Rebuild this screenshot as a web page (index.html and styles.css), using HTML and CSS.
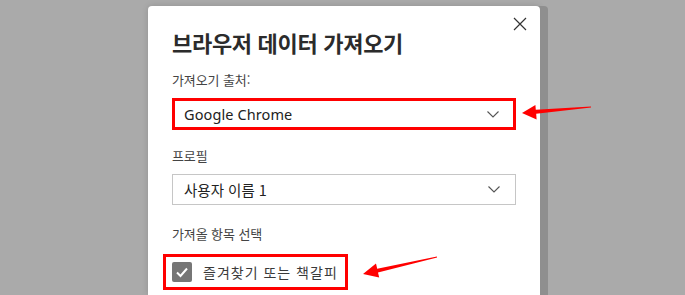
FILE: index.html
```html
<!DOCTYPE html>
<html lang="ko">
<head>
    <meta charset="UTF-8">
    <meta name="viewport" content="width=device-width, initial-scale=1.0">
    <title>브라우저 데이터 가져오기</title>
    <link rel="stylesheet" href="styles.css">
</head>
<body>
    <div class="page">
        <div class="dialog">
            <button class="close" aria-label="닫기">
                <svg width="14" height="14" viewBox="0 0 14 14">
                    <path d="M1 1 L13 13 M13 1 L1 13" stroke="#333" stroke-width="1.2" fill="none"/>
                </svg>
            </button>

            <h1>브라우저 데이터 가져오기</h1>

            <label class="field-label">가져오기 출처:</label>
            <div class="select highlight">
                <span class="latin">Google Chrome</span>
                <svg class="chevron" width="12" height="7" viewBox="0 0 12 7">
                    <path d="M0.5 0.5 L6 6 L11.5 0.5" stroke="#555" stroke-width="1.1" fill="none"/>
                </svg>
            </div>

            <label class="field-label">프로필</label>
            <div class="select">
                <span>사용자 이름 1</span>
                <svg class="chevron" width="12" height="7" viewBox="0 0 12 7">
                    <path d="M0.5 0.5 L6 6 L11.5 0.5" stroke="#555" stroke-width="1.1" fill="none"/>
                </svg>
            </div>

            <label class="field-label section">가져올 항목 선택</label>
            <div class="check-row">
                <span class="checkbox">
                    <svg width="20" height="20" viewBox="0 0 20 20">
                        <path d="M5 10.5 L8.5 14 L15 6.5" stroke="#fff" stroke-width="2" fill="none"/>
                    </svg>
                </span>
                <span class="check-text">즐겨찾기 또는 책갈피</span>
            </div>
        </div>
    </div>

    <!-- callout arrows drawn over the screenshot -->
    <svg class="arrows" width="685" height="295" viewBox="0 0 685 295">
        <polygon fill="#f00" points="522,113 536.6,119.5 536.2,113.8 591,107.6 591,106.6 535.8,109.8 535.4,105"/>
        <polygon fill="#f00" points="363,274 379.2,277.6 378,272.5 437.1,257.6 436.9,256.4 377.2,268.7 376,263.6"/>
    </svg>
</body>
</html>
```

FILE: styles.css
```css
/* dialog over a dimmed page */
body {
    margin: 0;
    background-color: #aaaaaa;
    font-family: "Noto Sans CJK KR", "Noto Sans", sans-serif;
    overflow: hidden;
}

.page {
    padding: 6px 0 0 148px;
}

.dialog {
    position: relative;
    width: 344px;
    height: 268px;
    padding: 21px 24px 0 24px;
    background-color: #fff;
    border-radius: 4px 4px 0 0;
    box-shadow: 8px 0 0 #8f8f8f, 0 0 6px rgba(0, 0, 0, 0.15);
}

.close {
    position: absolute;
    top: 11px;
    right: 13px;
    padding: 0;
    border: none;
    background: none;
    line-height: 0;
}

h1 {
    margin: 0 0 14px 0;
    font-size: 22px;
    line-height: 30px;
    font-weight: 600;
    color: #2b2b2b;
    letter-spacing: -0.3px;
}

.field-label {
    display: block;
    font-size: 13px;
    line-height: 18px;
    color: #444;
    letter-spacing: -0.1px;
    margin-bottom: 9px;
}

.field-label.section {
    margin-bottom: 11px;
}

.select {
    display: flex;
    align-items: center;
    justify-content: space-between;
    box-sizing: border-box;
    height: 31px;
    padding: 0 15px 0 11px;
    border: 1px solid #c6c6c6;
    font-size: 14.5px;
    color: #222;
    margin-bottom: 20px;
}

.select.highlight {
    height: 32px;
    border: 3px solid #ff0000;
    padding: 0 14px 0 9px;
    margin-bottom: 17px;
}

.latin {
    font-family: "Noto Sans", sans-serif;
    font-size: 14.5px;
    letter-spacing: 0.1px;
}

.check-row {
    display: inline-flex;
    align-items: center;
    gap: 11px;
    margin-left: -9px;
    padding: 5px 7px 5px 6px;
    border: 3px solid #ff0000;
}

.checkbox {
    width: 20px;
    height: 20px;
    background-color: #767676;
    border-radius: 2px;
    line-height: 0;
}

.check-text {
    font-size: 14px;
    line-height: 20px;
    color: #3a3a3a;
    letter-spacing: 1px;
}

.arrows {
    position: absolute;
    top: 0;
    left: 0;
    pointer-events: none;
}
```
